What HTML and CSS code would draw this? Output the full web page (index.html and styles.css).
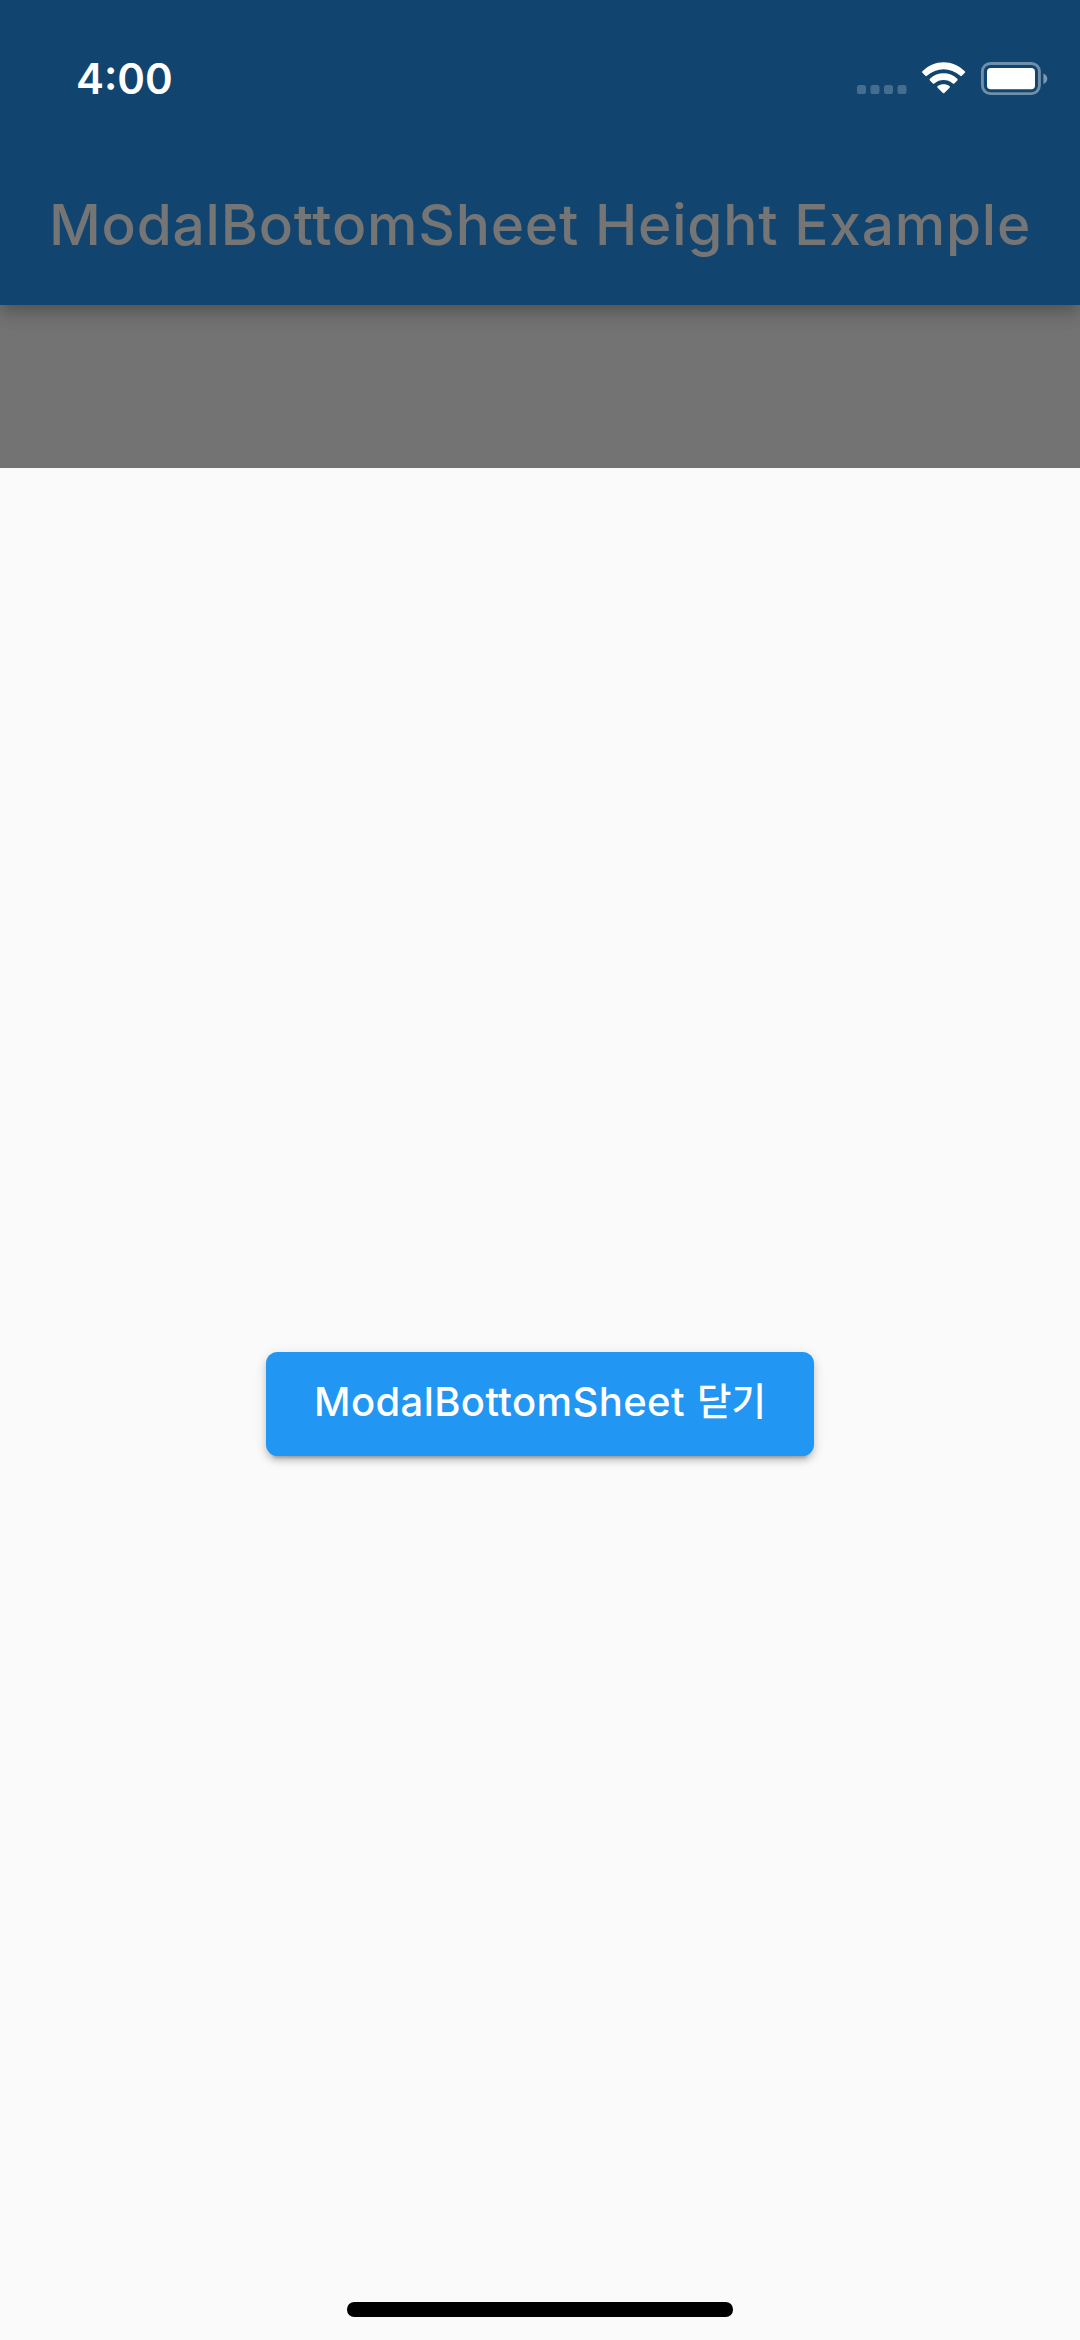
FILE: index.html
```html
<!DOCTYPE html>
<html lang="ko">
<head>
<meta charset="utf-8">
<title>ModalBottomSheet Height Example</title>
<link rel="stylesheet" href="styles.css">
</head>
<body>
<div class="screen">
  <header class="app-bar">
    <div class="status-bar">
      <span class="time">4:00</span>
      <svg class="status-icons" width="200" height="40" viewBox="0 0 200 40">
        <g fill="#fff" fill-opacity=".22">
          <rect x="7" y="25" width="9" height="9" rx="2.6"/>
          <rect x="20.5" y="25" width="9" height="9" rx="2.6"/>
          <rect x="34" y="25" width="9" height="9" rx="2.6"/>
          <rect x="47.5" y="25" width="9" height="9" rx="2.6"/>
        </g>
        <g fill="#fff">
          <path d="M72.4 11.2Q71.6 12 72.4 12.8L75.4 15.8Q76.1 16.5 76.9 15.8C86.6 7 100.6 7 110.3 15.8Q111.1 16.5 111.8 15.8L114.8 12.8Q115.6 12 114.8 11.2C102.6-.8 84.6-.8 72.4 11.2Z"/>
          <path d="M79.9 18.8Q79.1 19.6 79.9 20.4L82.9 23.4Q83.6 24.1 84.4 23.4C89.6 18.8 97.6 18.8 102.8 23.4Q103.6 24.1 104.3 23.4L107.3 20.4Q108.1 19.6 107.3 18.8C99.6 11.5 87.6 11.5 79.9 18.8Z"/>
          <path d="M87.5 26.2Q86.9 27 87.6 27.7L92.9 33Q93.6 33.7 94.3 33L99.6 27.7Q100.3 27 99.7 26.2C96.1 23.6 91.1 23.6 87.5 26.2Z"/>
        </g>
        <rect x="132.4" y="3.5" width="57" height="30.1" rx="8" fill="none" stroke="#fff" stroke-opacity=".4" stroke-width="2.9"/>
        <rect x="137" y="8" width="48" height="21.3" rx="3.8" fill="#fff"/>
        <path d="M193.4 13.5C198.6 15.5 198.6 22 193.4 24Z" fill="#fff" fill-opacity=".45"/>
      </svg>
    </div>
    <h1 class="title">ModalBottomSheet Height Example</h1>
  </header>
  <div class="backdrop"></div>
  <main class="sheet">
    <button class="close" type="button"><span class="latin">ModalBottomSheet</span><span class="korean">닫기</span></button>
  </main>
  <footer class="home"><div class="home-indicator"></div></footer>
</div>
</body>
</html>
```
FILE: styles.css
```css
* { box-sizing: border-box; }
body { margin: 0; background: #fafafa; font-family: Inter, "Noto Sans CJK KR", sans-serif; }
.screen { width: 1080px; height: 2340px; display: flex; flex-direction: column; overflow: hidden; }
.app-bar {
  height: 305.3px;
  flex: none;
  background: #11456f;
  z-index: 1;
  display: flex;
  flex-direction: column;
  box-shadow: 0 6px 12px -3px rgba(0,0,0,.16), 0 12px 15px rgba(0,0,0,.09), 0 3px 28px rgba(0,0,0,.08);
  clip-path: inset(0 0 -60px 0);
}
.status-bar { height: 145px; padding: 60px 24px 0 76px; display: flex; justify-content: space-between; align-items: flex-start; }
.time { color: #fff; font-size: 42px; font-weight: 600; line-height: 38px; letter-spacing: 0; }
.status-icons { display: block; margin-right: 6px; margin-left: auto; }
.title { margin: 0; color: #757575; font-size: 56.8px; font-weight: 500; line-height: 160px; text-align: center; white-space: nowrap; letter-spacing: .78px; }
.backdrop { flex: none; height: 162.7px; background: #737373; }
.sheet { flex: 1; display: flex; justify-content: center; align-items: flex-start; padding-top: 884px; background: #fafafa; }
.close {
  width: 547.4px;
  height: 103.7px;
  padding: 0 0 3px;
  border: 0;
  border-radius: 11.5px;
  display: flex;
  justify-content: center;
  align-items: center;
  gap: 12px;
  background: #2196f3;
  color: #fff;
  font: 500 40px/48px Inter, "Noto Sans CJK KR", sans-serif;
  white-space: nowrap;
  box-shadow: 0 8px 3px -6px rgba(0,0,0,.2), 0 5px 6px rgba(0,0,0,.14), 0 3px 13px rgba(0,0,0,.12);
}
.latin { letter-spacing: .4px; }
.korean { padding-bottom: 6px; font-family: "Noto Sans CJK KR", sans-serif; font-size: 37.5px; font-weight: 500; }
.home { flex: none; height: 37.7px; display: flex; justify-content: center; background: #fafafa; }
.home-indicator { width: 386px; height: 14.4px; border-radius: 7.2px; background: #000; }
```
